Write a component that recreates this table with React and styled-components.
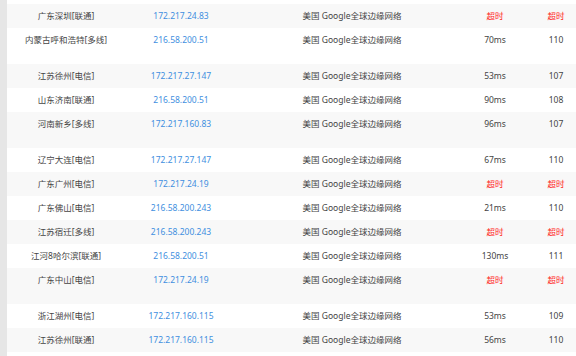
import React from "react";
import styled, { createGlobalStyle } from "styled-components";

const GlobalStyle = createGlobalStyle`
  html, body {
    margin: 0;
    padding: 0;
    overflow: hidden;
  }
  body {
    font-family: "Noto Sans", "Noto Sans CJK SC", sans-serif;
  }
`;

export const Page = styled.div`
  width: 576px;
  height: 356px;
  overflow: hidden;
  background-color: #e6e6e6;
  padding-left: 7px;
  box-sizing: border-box;
`;

export const Table = styled.div`
  width: 582px;
  background-color: #fff;
  padding-top: 4px;
`;

export const Row = styled.div`
  display: grid;
  grid-template-columns: 118px 112px 230px 56px 66px;
  height: ${(p) => (p.$tall ? "36px" : "24px")};
  align-items: start;
  font-size: 8.5px;
  color: #444;

  &:nth-child(odd) {
    background-color: #f8f8f8;
  }
`;

export const Cell = styled.div`
  height: 24px;
  line-height: 24px;
  text-align: center;
  white-space: nowrap;
  color: ${(p) => (p.$timeout ? "#ff2020" : p.$ip ? "#3f8fe0" : "inherit")};
`;

const rows = [
  ["广东深圳[联通]", "172.217.24.83", null, null],
  ["内蒙古呼和浩特[多线]", "216.58.200.51", "70ms", "110", true],
  ["江苏徐州[电信]", "172.217.27.147", "53ms", "107"],
  ["山东济南[联通]", "216.58.200.51", "90ms", "108"],
  ["河南新乡[多线]", "172.217.160.83", "96ms", "107", true],
  ["辽宁大连[电信]", "172.217.27.147", "67ms", "110"],
  ["广东广州[电信]", "172.217.24.19", null, null],
  ["广东佛山[电信]", "216.58.200.243", "21ms", "110"],
  ["江苏宿迁[多线]", "216.58.200.243", null, null],
  ["江河8哈尔滨[联通]", "216.58.200.51", "130ms", "111"],
  ["广东中山[电信]", "172.217.24.19", null, null, true],
  ["浙江湖州[电信]", "172.217.160.115", "53ms", "109"],
  ["江苏徐州[联通]", "172.217.160.115", "56ms", "110"],
];

export default function App() {
  return (
    <>
      <GlobalStyle />
      <Page>
        <Table>
          {rows.map(([place, ip, ms, ttl, tall], i) => (
            <Row key={i} $tall={tall}>
              <Cell>{place}</Cell>
              <Cell $ip>{ip}</Cell>
              <Cell>美国 Google全球边缘网络</Cell>
              <Cell $timeout={!ms}>{ms || "超时"}</Cell>
              <Cell $timeout={!ttl}>{ttl || "超时"}</Cell>
            </Row>
          ))}
          <Row />
        </Table>
      </Page>
    </>
  );
}
